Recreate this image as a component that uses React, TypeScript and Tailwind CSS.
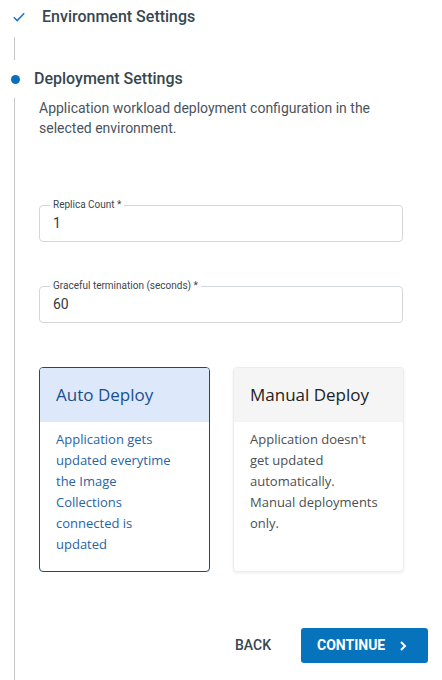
import React from "react"

function OutlinedField({ label, value }: { label: string; value: string }) {
    return (
        <div className="relative h-[37px] w-[364px] rounded-[4px] border border-[#d3d6da] flex items-center pl-[13px]">
            <span className="absolute -top-[7px] left-[10px] bg-white px-[3px] text-[10px] leading-[12px] text-[#3c4650]">
                {label}
            </span>
            <span className="text-[14px] text-[#333a40]">{value}</span>
        </div>
    )
}

function DeployCard({
    title,
    body,
    selected,
}: {
    title: string
    body: string[]
    selected?: boolean
}) {
    return (
        <div
            className={`w-[171px] h-[205px] rounded-[4px] overflow-hidden flex flex-col ${
                selected
                    ? "border border-[#1d4a7e]"
                    : "border border-[#ececec] shadow-[0_1px_3px_rgba(0,0,0,0.08)]"
            }`}
            style={{ fontFamily: '"Open Sans", sans-serif' }}
        >
            <div
                className={`h-[54px] flex items-center px-[16px] text-[17px] ${
                    selected ? "bg-[#dde9fb] text-[#1b4f8c]" : "bg-[#f5f5f5] text-[#222222]"
                }`}
            >
                {title}
            </div>
            <div
                className={`pt-[7px] pl-[16px] text-[13px] leading-[21px] ${
                    selected ? "w-[142px] text-[#2864a4]" : "w-[153px] text-[#4b4f54]"
                }`}
            >
                {body.map((s) => (
                    <p key={s}>{s}</p>
                ))}
            </div>
        </div>
    )
}

export default function App() {
    return (
        <div
            className="w-[442px] h-[680px] overflow-hidden bg-white"
            style={{ fontFamily: "Roboto, sans-serif" }}
        >
            {/* completed step */}
            <div className="flex items-center h-[34px]">
                <svg className="ml-[13px] w-[12px] h-[10px]" viewBox="0 0 12 10" fill="none">
                    <path d="M0.8 5.2 L4.2 8.6 L11.2 1.2" stroke="#1a73c7" strokeWidth="1.5" />
                </svg>
                <span className="ml-[17px] text-[16px] font-medium text-[#37474f]">
                    Environment Settings
                </span>
            </div>
            <div className="ml-[14px] mt-[3px] h-[23px] border-l border-[#c6c6c6]" />

            {/* active step */}
            <div className="flex items-center h-[38px]">
                <div className="ml-[11px] w-[9px] h-[9px] rounded-full bg-[#0b6fbf]" />
                <span className="ml-[14px] text-[16px] font-medium text-[#37474f]">
                    Deployment Settings
                </span>
            </div>

            <div className="ml-[14px] border-l border-[#c6c6c6] pl-[24px] h-[600px]">
                <p className="w-[364px] text-[14px] leading-[20px] text-[#4a5460]">
                    Application workload deployment configuration in the selected environment.
                </p>

                <div className="mt-[67px] flex flex-col gap-[44px]">
                    <OutlinedField label="Replica Count *" value="1" />
                    <OutlinedField label="Graceful termination (seconds) *" value="60" />
                </div>

                <div className="mt-[44px] flex gap-[23px]">
                    <DeployCard
                        selected
                        title="Auto Deploy"
                        body={["Application gets updated everytime the Image Collections connected is updated"]}
                    />
                    <DeployCard
                        title="Manual Deploy"
                        body={["Application doesn't get updated automatically.", "Manual deployments only."]}
                    />
                </div>

                <div className="mt-[56px] mr-[14px] flex justify-end items-center gap-[14px]">
                    <button className="h-[35px] px-[16px] text-[14px] font-medium text-[#37474f]">
                        BACK
                    </button>
                    <button className="h-[35px] w-[127px] rounded-[3px] bg-[#0873bd] flex items-center pl-[16px] text-[14px] font-bold text-white">
                        CONTINUE
                        <svg className="ml-[14px] w-[8px] h-[10px]" viewBox="0 0 8 10" fill="none">
                            <path d="M2 1 L6 5 L2 9" stroke="white" strokeWidth="2" />
                        </svg>
                    </button>
                </div>
            </div>
        </div>
    )
}
